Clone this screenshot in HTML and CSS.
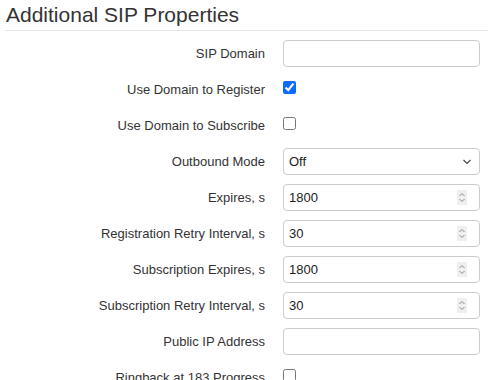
FILE: index.html
```html
<html lang="en">
	<head>
		<meta charset="UTF-8" />
		<meta name="viewport" content="width=device-width, initial-scale=1.0" />
		<title>Additional SIP Properties</title>
		<link rel="stylesheet" href="styles.css">
	</head>
	<body>
		<div class="panel">
			<h3 class="panel-title">Additional SIP Properties</h3>

			<div class="form">
				<label class="form-label">SIP Domain</label>
				<div class="field"><input class="field-input" type="text" value="" /></div>

				<label class="form-label">Use Domain to Register</label>
				<div class="check"><input type="checkbox" checked /></div>

				<label class="form-label">Use Domain to Subscribe</label>
				<div class="check"><input type="checkbox" /></div>

				<label class="form-label">Outbound Mode</label>
				<div class="field">
					<span class="field-value">Off</span>
					<svg class="chevron" width="10" height="6" viewBox="0 0 10 6"><path d="M1.5 1l3.5 3.5 3.5-3.5" fill="none" stroke="#444" stroke-width="1.1" /></svg>
				</div>

				<label class="form-label">Expires, s</label>
				<div class="field">
					<input class="field-input" type="text" value="1800" />
					<span class="spin"><svg width="10" height="15" viewBox="0 0 10 15"><path d="M2.5 6l2.5-2.5 2.5 2.5M2.5 9l2.5 2.5 2.5-2.5" fill="none" stroke="#8a8a8a" stroke-width="1" /></svg></span>
				</div>

				<label class="form-label">Registration Retry Interval, s</label>
				<div class="field">
					<input class="field-input" type="text" value="30" />
					<span class="spin"><svg width="10" height="15" viewBox="0 0 10 15"><path d="M2.5 6l2.5-2.5 2.5 2.5M2.5 9l2.5 2.5 2.5-2.5" fill="none" stroke="#8a8a8a" stroke-width="1" /></svg></span>
				</div>

				<label class="form-label">Subscription Expires, s</label>
				<div class="field">
					<input class="field-input" type="text" value="1800" />
					<span class="spin"><svg width="10" height="15" viewBox="0 0 10 15"><path d="M2.5 6l2.5-2.5 2.5 2.5M2.5 9l2.5 2.5 2.5-2.5" fill="none" stroke="#8a8a8a" stroke-width="1" /></svg></span>
				</div>

				<label class="form-label">Subscription Retry Interval, s</label>
				<div class="field">
					<input class="field-input" type="text" value="30" />
					<span class="spin"><svg width="10" height="15" viewBox="0 0 10 15"><path d="M2.5 6l2.5-2.5 2.5 2.5M2.5 9l2.5 2.5 2.5-2.5" fill="none" stroke="#8a8a8a" stroke-width="1" /></svg></span>
				</div>

				<label class="form-label">Public IP Address</label>
				<div class="field"><input class="field-input" type="text" value="" /></div>

				<label class="form-label">Ringback at 183 Progress</label>
				<div class="check"><input type="checkbox" /></div>
			</div>
		</div>
	</body>
</html>
```

FILE: styles.css
```css
* {
	margin: 0;
	padding: 0;
	box-sizing: border-box;
}

body {
	background-color: #fff;
	color: #333;
	font-family: "Liberation Sans", Arial, sans-serif;
	font-size: 13px;
	overflow: hidden;
}

.panel {
	padding-left: 5px;
}

.panel-title {
	padding: 4px 0 0 1px;
	height: 31px;
	font-size: 21px;
	font-weight: normal;
	line-height: 22px;
	color: #333;
	border-bottom: 1px solid #e5e5e5;
}

.form {
	display: grid;
	grid-template-columns: 260px 197px;
	grid-auto-rows: 27px;
	column-gap: 18px;
	row-gap: 9px;
	padding-top: 9px;
}

.form-label {
	display: flex;
	align-items: center;
	justify-content: flex-end;
	white-space: nowrap;
}

.field {
	display: flex;
	align-items: center;
	border: 1px solid #ccc;
	border-radius: 4px;
	padding: 0 6px 0 5px;
	background-color: #fff;
}

.field-input {
	flex: 1;
	min-width: 0;
	border: none;
	outline: none;
	background: transparent;
	font-family: inherit;
	font-size: 13px;
	color: #222;
}

.field-value {
	flex: 1;
	color: #222;
}

.chevron {
	margin-right: 1px;
}

.spin {
	display: flex;
	width: 10px;
	height: 15px;
	background-color: #efefef;
	margin-right: 6px;
}

.check {
	display: flex;
	align-items: flex-start;
}

.check input {
	width: 13px;
	height: 13px;
	margin: 5px 0 0 0;
	accent-color: #0b6cff;
}
```
